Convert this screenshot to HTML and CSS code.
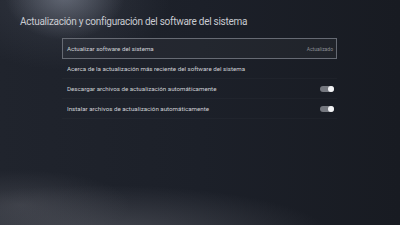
FILE: index.html
```html
<!DOCTYPE html>
<html lang="es">
<head>
<meta charset="utf-8">
<title>Actualización y configuración del software del sistema</title>
<link rel="stylesheet" href="styles.css">
</head>
<body>
<main class="screen">
  <h1 class="title">Actualización y configuración del software del sistema</h1>
  <ul class="menu">
    <li class="row selected">
      <span class="label">Actualizar software del sistema</span>
      <span class="status">Actualizado</span>
    </li>
    <li class="row">
      <span class="label">Acerca de la actualización más reciente del software del sistema</span>
    </li>
    <li class="row">
      <span class="label">Descargar archivos de actualización automáticamente</span>
      <span class="toggle on"><span class="knob"></span></span>
    </li>
    <li class="row">
      <span class="label">Instalar archivos de actualización automáticamente</span>
      <span class="toggle on"><span class="knob"></span></span>
    </li>
  </ul>
</main>
</body>
</html>
```
FILE: styles.css
```css
html, body {
  margin: 0;
  padding: 0;
}
body {
  width: 400px;
  height: 225px;
  overflow: hidden;
  font-family: Roboto, "Noto Sans", sans-serif;
}
.screen {
  height: 225px;
  box-sizing: border-box;
  padding-top: 16px;
  background:
    radial-gradient(ellipse 60px 45px at 65px -5px, rgba(130,136,150,0.6), rgba(130,136,150,0) 100%),
    radial-gradient(ellipse 110px 70px at 60px 0px, rgba(90,96,110,0.3), rgba(90,96,110,0) 100%),
    radial-gradient(ellipse 230px 50px at 100px 235px, rgba(100,102,110,0.55), rgba(100,102,110,0) 100%),
    radial-gradient(ellipse 110px 35px at 20px 205px, rgba(85,87,95,0.45), rgba(85,87,95,0) 100%),
    linear-gradient(90deg, #20242d 0%, #1c2029 50%, #181b22 100%);
}
.title {
  margin: 0 0 10px 20px;
  font-weight: 400;
  font-size: 10px;
  line-height: 12px;
  letter-spacing: -0.28px;
  color: #c9cbd1;
}
.menu {
  list-style: none;
  margin: 0 0 0 62px;
  padding: 0;
  width: 275px;
}
.row {
  display: flex;
  align-items: center;
  justify-content: space-between;
  box-sizing: border-box;
  height: 20px;
  padding: 0 3px 0 5px;
  border-bottom: 1px solid rgba(255,255,255,0.025);
  font-size: 6.2px;
  color: #cfd1d6;
}
.row.selected {
  height: 21px;
  border: 1px solid #666a73;
  background: rgba(255,255,255,0.03);
  padding: 0 3px 0 4px;
}
.status {
  font-size: 5px;
  color: #8b8e95;
}
.toggle {
  display: flex;
  align-items: center;
  justify-content: flex-end;
  width: 14px;
  height: 6px;
  border-radius: 3px;
  background: #75787f;
}
.knob {
  width: 6px;
  height: 6px;
  border-radius: 50%;
  background: #f2f3f5;
}
```
